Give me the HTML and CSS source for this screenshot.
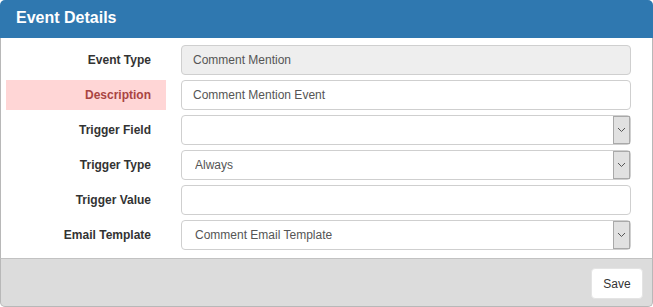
FILE: index.html
```html
<!DOCTYPE html>
<html lang="en">
  <head>
    <meta charset="utf-8">
    <title>Event Details</title>
    <link rel="stylesheet" href="styles.css">
  </head>
  <body>
<div class="panel">
  <div class="panelHeading">Event Details</div>
  <div class="panelBody">
    <div class="formGrid">
      <label class="fieldLabel">Event Type</label>
      <input class="field" value="Comment Mention" disabled>

      <label class="fieldLabel hasError">Description</label>
      <input class="field" value="Comment Mention Event">

      <label class="fieldLabel">Trigger Field</label>
      <div class="selectWrap">
        <select class="field selectField"><option></option></select>
        <span class="arrow"><svg width="9" height="6" viewBox="0 0 9 6"><path d="M1 1 L4.5 4.5 L8 1" fill="none" stroke="#555" stroke-width="1"/></svg></span>
      </div>

      <label class="fieldLabel">Trigger Type</label>
      <div class="selectWrap">
        <select class="field selectField"><option>Always</option></select>
        <span class="arrow"><svg width="9" height="6" viewBox="0 0 9 6"><path d="M1 1 L4.5 4.5 L8 1" fill="none" stroke="#555" stroke-width="1"/></svg></span>
      </div>

      <label class="fieldLabel">Trigger Value</label>
      <input class="field" value="">

      <label class="fieldLabel">Email Template</label>
      <div class="selectWrap">
        <select class="field selectField"><option>Comment Email Template</option></select>
        <span class="arrow"><svg width="9" height="6" viewBox="0 0 9 6"><path d="M1 1 L4.5 4.5 L8 1" fill="none" stroke="#555" stroke-width="1"/></svg></span>
      </div>
    </div>
  </div>
  <div class="panelFooter">
    <button class="saveBtn">Save</button>
  </div>
</div>
  </body>
</html>
```

FILE: styles.css
```css
* {
  box-sizing: border-box;
  font-family: 'Liberation Sans', Arial, sans-serif;
}
body {
  margin: 0;
  background-color: white;
}
.panel {
  width: 653px;
}
.panelHeading {
  height: 38px;
  padding: 9px 16px 0 16px;
  background-color: #2f78b0;
  color: white;
  font-size: 16px;
  font-weight: bold;
  border-radius: 5px 5px 0 0;
}
.panelBody {
  padding: 7px 21px 8px 5px;
  border-left: 1px solid #b8b8b8;
  border-right: 1px solid #b8b8b8;
}
.formGrid {
  display: grid;
  grid-template-columns: 160px 1fr;
  column-gap: 15px;
  row-gap: 5px;
}
.fieldLabel {
  height: 30px;
  line-height: 30px;
  padding-right: 15px;
  text-align: right;
  font-size: 12px;
  font-weight: bold;
  color: #333;
}
.hasError {
  background-color: #ffd6d6;
  color: #a94442;
}
.field {
  width: 100%;
  height: 30px;
  margin: 0;
  padding: 0 11px;
  border: 1px solid #cfcfcf;
  border-radius: 4px;
  background-color: white;
  font-size: 12px;
  color: #555;
  outline: none;
}
.field:disabled {
  background-color: #eeeeee;
  color: #555;
}
.selectWrap {
  position: relative;
}
.selectField {
  appearance: none;
  -webkit-appearance: none;
  padding-left: 13px;
}
.arrow {
  position: absolute;
  top: 1px;
  right: 1px;
  width: 17px;
  height: 28px;
  display: flex;
  align-items: center;
  justify-content: center;
  background-color: #e1e1e1;
  border: 1px solid #a9a9a9;
  pointer-events: none;
}
.panelFooter {
  display: flex;
  justify-content: flex-end;
  padding: 9px 9px 7px 0;
  background-color: #dcdcdc;
  border: 1px solid #b8b8b8;
  border-top-color: #c2c2c2;
  border-radius: 0 0 5px 5px;
}
.saveBtn {
  width: 52px;
  height: 31px;
  border: 1px solid #e4e4e4;
  border-radius: 4px;
  background: white;
  color: #333;
  font-size: 12px;
  cursor: pointer;
}
```
